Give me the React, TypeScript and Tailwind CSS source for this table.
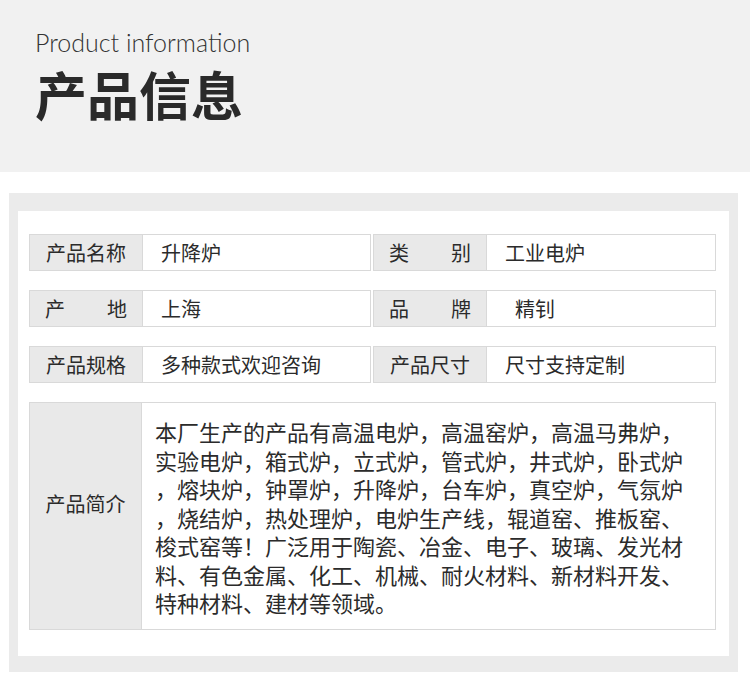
const cjk = { fontFamily: '"Noto Sans CJK SC", "Noto Sans", sans-serif' };

const desc = [
  '本厂生产的产品有高温电炉，高温窑炉，高温马弗炉，',
  '实验电炉，箱式炉，立式炉，管式炉，井式炉，卧式炉',
  '，熔块炉，钟罩炉，升降炉，台车炉，真空炉，气氛炉',
  '，烧结炉，热处理炉，电炉生产线，辊道窑、推板窑、',
  '梭式窑等！广泛用于陶瓷、冶金、电子、玻璃、发光材',
  '料、有色金属、化工、机械、耐火材料、新材料开发、',
  '特种材料、建材等领域。',
];

const rows: [string, string, string, string][] = [
  ['产品名称', '升降炉', '类别', '工业电炉'],
  ['产地', '上海', '品牌', '精钊'],
  ['产品规格', '多种款式欢迎咨询', '产品尺寸', '尺寸支持定制'],
];

function Label({ text }: { text: string }) {
  const chars = text.split('');
  return (
    <div className="flex h-full w-[114px] flex-none items-center justify-center border border-[#d9d9d9] bg-[#e9e9e9]">
      <div className={`flex w-[82px] ${chars.length === 2 ? 'justify-between' : 'justify-center'}`}>
        {chars.map((c, i) => (
          <span key={i}>{c}</span>
        ))}
      </div>
    </div>
  );
}

function Cell({ label, value, indent }: { label: string; value: string; indent?: boolean }) {
  return (
    <div className="flex h-[37px] items-stretch">
      <Label text={label} />
      <div className={`flex flex-1 items-center border border-l-0 border-[#d9d9d9] bg-white ${indent ? 'pl-[28px]' : 'pl-[18px]'}`}>
        {value}
      </div>
    </div>
  );
}

export default function App() {
  return (
    <div className="h-[690px] w-[750px] bg-white text-[#2b2b2b]" style={cjk}>
      <header className="h-[172px] bg-[#f1f1f1] pl-[35px] pt-[27px]">
        <p
          className="text-[25px] font-light leading-[30px] text-[#333]"
          style={{ fontFamily: 'Lato, "Open Sans", sans-serif' }}
        >
          Product information
        </p>
        <h1 className="mt-[5px] text-[52px] font-bold leading-[64px] text-[#2a2a2a]">产品信息</h1>
      </header>

      <div className="ml-[9px] mt-[21px] w-[729px] bg-[#ebebeb] pb-[16px] pl-[9px] pr-[9px] pt-[18px]">
        <div className="bg-white pb-[26px] pl-[11px] pr-[13px] pt-[23px] text-[20px]">
          <div className="flex flex-col gap-[19px]">
            {rows.map((r, i) => (
              <div key={i} className="grid grid-cols-[342px_343px] gap-[2px]">
                <Cell label={r[0]} value={r[1]} />
                <Cell label={r[2]} value={r[3]} indent={r[3] === '精钊'} />
              </div>
            ))}
            <div className="flex h-[228px] items-stretch">
              <div className="flex w-[113px] flex-none items-center justify-center border border-[#d9d9d9] bg-[#e9e9e9] pb-[24px]">
                产品简介
              </div>
              <div className="flex-1 border border-l-0 border-[#d9d9d9] bg-white pl-[13px] pt-[14px] text-[22px] leading-[28.5px]">
                {desc.map((l, i) => (
                  <div key={i} className="whitespace-nowrap">
                    {l}
                  </div>
                ))}
              </div>
            </div>
          </div>
        </div>
      </div>
    </div>
  );
}
